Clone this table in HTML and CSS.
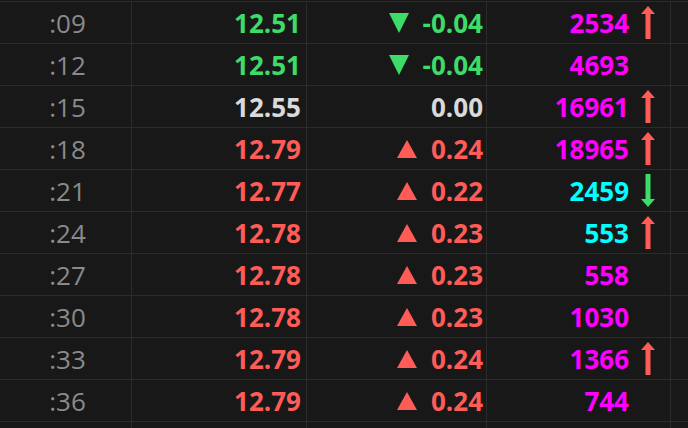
FILE: index.html
```html
<!DOCTYPE html>
<html lang="en">
<head>
    <meta charset="UTF-8">
    <title>Tick list</title>
    <link rel="stylesheet" href="styles.css">
</head>
<body>
    <div class="ticks">
        <div class="row">
            <div class="cell time">:09</div>
            <div class="cell price down">12.51</div>
            <div class="cell change down"><span class="tri tri-down"></span>-0.04</div>
            <div class="cell vol"><span class="mag">2534</span><span class="arrow"><svg viewBox="0 0 14 33" class="up-arrow"><polygon points="7,0 14,8 9.5,8 9.5,33 4.5,33 4.5,8 0,8"/></svg></span></div>
            <div class="cell end"></div>
        </div>
        <div class="row">
            <div class="cell time">:12</div>
            <div class="cell price down">12.51</div>
            <div class="cell change down"><span class="tri tri-down"></span>-0.04</div>
            <div class="cell vol"><span class="mag">4693</span><span class="arrow"></span></div>
            <div class="cell end"></div>
        </div>
        <div class="row">
            <div class="cell time">:15</div>
            <div class="cell price flat">12.55</div>
            <div class="cell change flat">0.00</div>
            <div class="cell vol"><span class="mag">16961</span><span class="arrow"><svg viewBox="0 0 14 33" class="up-arrow"><polygon points="7,0 14,8 9.5,8 9.5,33 4.5,33 4.5,8 0,8"/></svg></span></div>
            <div class="cell end"></div>
        </div>
        <div class="row">
            <div class="cell time">:18</div>
            <div class="cell price up">12.79</div>
            <div class="cell change up"><span class="tri tri-up"></span>0.24</div>
            <div class="cell vol"><span class="mag">18965</span><span class="arrow"><svg viewBox="0 0 14 33" class="up-arrow"><polygon points="7,0 14,8 9.5,8 9.5,33 4.5,33 4.5,8 0,8"/></svg></span></div>
            <div class="cell end"></div>
        </div>
        <div class="row">
            <div class="cell time">:21</div>
            <div class="cell price up">12.77</div>
            <div class="cell change up"><span class="tri tri-up"></span>0.22</div>
            <div class="cell vol"><span class="cyan">2459</span><span class="arrow"><svg viewBox="0 0 14 33" class="down-arrow"><polygon points="7,33 14,25 9.5,25 9.5,0 4.5,0 4.5,25 0,25"/></svg></span></div>
            <div class="cell end"></div>
        </div>
        <div class="row">
            <div class="cell time">:24</div>
            <div class="cell price up">12.78</div>
            <div class="cell change up"><span class="tri tri-up"></span>0.23</div>
            <div class="cell vol"><span class="cyan">553</span><span class="arrow"><svg viewBox="0 0 14 33" class="up-arrow"><polygon points="7,0 14,8 9.5,8 9.5,33 4.5,33 4.5,8 0,8"/></svg></span></div>
            <div class="cell end"></div>
        </div>
        <div class="row">
            <div class="cell time">:27</div>
            <div class="cell price up">12.78</div>
            <div class="cell change up"><span class="tri tri-up"></span>0.23</div>
            <div class="cell vol"><span class="mag">558</span><span class="arrow"></span></div>
            <div class="cell end"></div>
        </div>
        <div class="row">
            <div class="cell time">:30</div>
            <div class="cell price up">12.78</div>
            <div class="cell change up"><span class="tri tri-up"></span>0.23</div>
            <div class="cell vol"><span class="mag">1030</span><span class="arrow"></span></div>
            <div class="cell end"></div>
        </div>
        <div class="row">
            <div class="cell time">:33</div>
            <div class="cell price up">12.79</div>
            <div class="cell change up"><span class="tri tri-up"></span>0.24</div>
            <div class="cell vol"><span class="mag">1366</span><span class="arrow"><svg viewBox="0 0 14 33" class="up-arrow"><polygon points="7,0 14,8 9.5,8 9.5,33 4.5,33 4.5,8 0,8"/></svg></span></div>
            <div class="cell end"></div>
        </div>
        <div class="row">
            <div class="cell time">:36</div>
            <div class="cell price up">12.79</div>
            <div class="cell change up"><span class="tri tri-up"></span>0.24</div>
            <div class="cell vol"><span class="mag">744</span><span class="arrow"></span></div>
            <div class="cell end"></div>
        </div>
        <div class="row">
            <div class="cell time"></div>
            <div class="cell price"></div>
            <div class="cell change"></div>
            <div class="cell vol"></div>
            <div class="cell end"></div>
        </div>
    </div>
</body>
</html>
```

FILE: styles.css
```css
html, body {
    height: 100%;
    overflow: hidden;
}
body {
    margin: 0;
    padding-top: 1px;
    box-sizing: border-box;
    background-color: #181818;
    font-family: "Open Sans", "Noto Sans", sans-serif;
    font-size: 26px;
}
.ticks {
    height: 427px;
    overflow: hidden;
}
.row {
    display: grid;
    grid-template-columns: 132px 175px 180px 184px 17px;
    height: 41px;
    border-top: 1px solid #2b2b2b;
}
.cell {
    display: flex;
    align-items: center;
    justify-content: flex-end;
    border-right: 1px solid #2b2b2b;
    white-space: nowrap;
}
.cell.end { border-right: none; }
.time {
    justify-content: center;
    padding-left: 4px;
    color: #8a8a8a;
}
.price, .change, .vol { font-weight: 700; }
.price { padding-right: 5px; }
.change { padding-right: 3px; }
.up { color: #ff5c57; }
.down { color: #3ddc68; }
.flat { color: #dadada; }
.mag { color: #ff00ff; }
.cyan { color: #00ffff; }
.tri {
    width: 0;
    height: 0;
    margin-right: 14px;
    border-left: 10px solid transparent;
    border-right: 10px solid transparent;
}
.tri-up { border-bottom: 18px solid #ff5c57; }
.tri-down {
    border-left-width: 10.5px;
    border-right-width: 10.5px;
    border-top: 20px solid #3ddc68;
}
.arrow {
    display: flex;
    width: 14px;
    height: 33px;
    margin-left: 12px;
    margin-right: 15px;
}
.arrow svg { width: 14px; height: 33px; }
.up-arrow { fill: #ff5c57; }
.down-arrow { fill: #3ddc68; }
```
